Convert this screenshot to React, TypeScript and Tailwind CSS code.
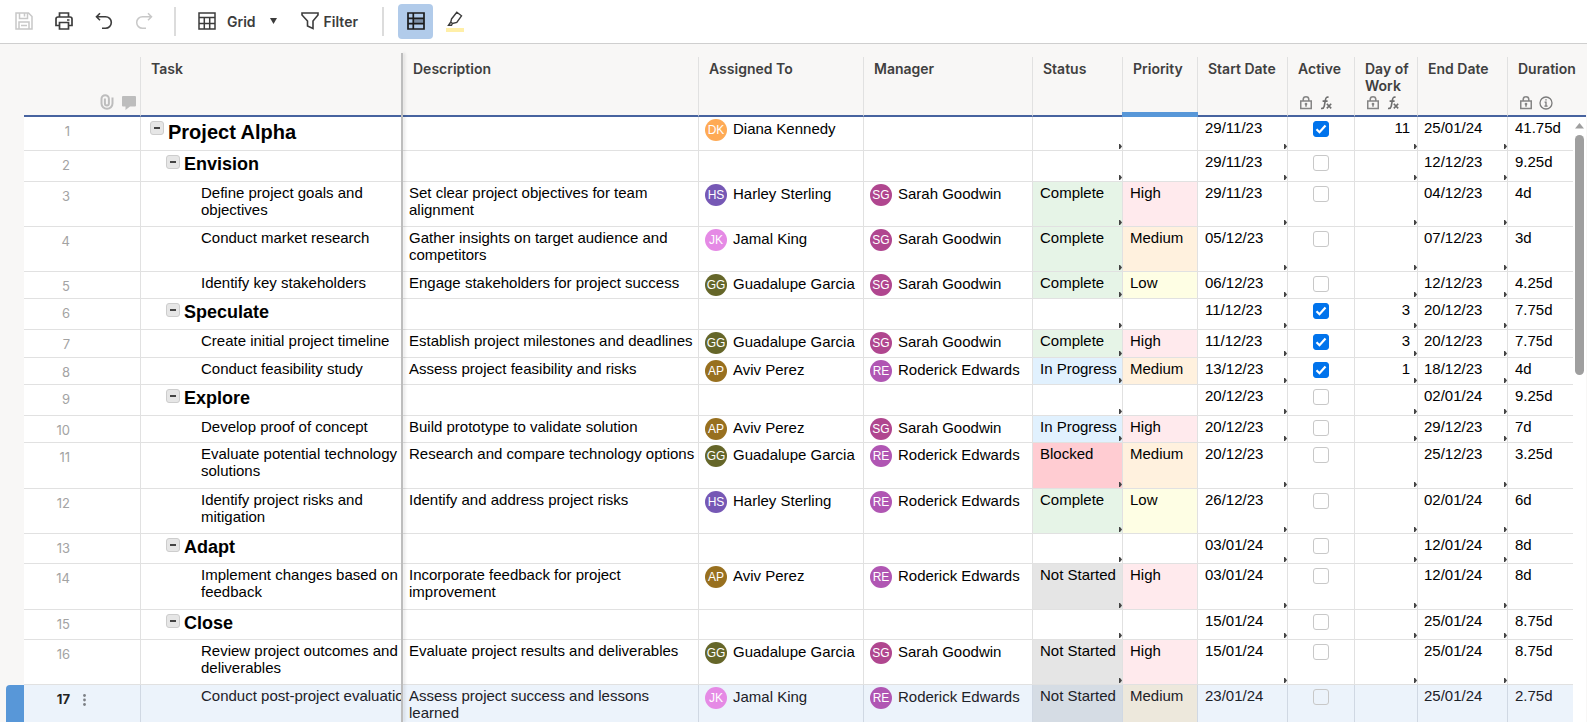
import { ReactNode } from "react";

const PEOPLE: Record<string, [string, string]> = {
  DK: ["Diana Kennedy", "bg-[#feaa55]"],
  HS: ["Harley Sterling", "bg-[#7658b5]"],
  JK: ["Jamal King", "bg-[#e58ae5]"],
  GG: ["Guadalupe Garcia", "bg-[#656629]"],
  AP: ["Aviv Perez", "bg-[#98701f]"],
  SG: ["Sarah Goodwin", "bg-[#b0468f]"],
  RE: ["Roderick Edwards", "bg-[#b056b3]"],
};

const TINT: Record<string, string> = {
  Complete: "bg-[#e6f4e7]",
  "In Progress": "bg-[#e1f1fe]",
  Blocked: "bg-[#ffccd2]",
  "Not Started": "bg-[#e5e5e5]",
  High: "bg-[#ffeaed]",
  Medium: "bg-[#fff1de]",
  Low: "bg-[#fefee4]",
};

const SELECTED_TINT: Record<string, string> = {
  "Not Started": "bg-[#d5dce4]",
  Medium: "bg-[#ede8dc]",
};

type Row = {
  level: 0 | 1 | 2;
  height: string;
  task: string;
  desc?: string;
  who?: string;
  boss?: string;
  status?: string;
  priority?: string;
  start: string;
  active?: boolean;
  day?: string;
  end: string;
  dur: string;
};

const ROWS: Row[] = [
  { level: 0, height: "h-[34px]", task: "Project Alpha", who: "DK", start: "29/11/23", active: true, day: "11", end: "25/01/24", dur: "41.75d" },
  { level: 1, height: "h-[31px]", task: "Envision", start: "29/11/23", end: "12/12/23", dur: "9.25d" },
  { level: 2, height: "h-[45px]", task: "Define project goals and objectives", desc: "Set clear project objectives for team alignment", who: "HS", boss: "SG", status: "Complete", priority: "High", start: "29/11/23", end: "04/12/23", dur: "4d" },
  { level: 2, height: "h-[45px]", task: "Conduct market research", desc: "Gather insights on target audience and competitors", who: "JK", boss: "SG", status: "Complete", priority: "Medium", start: "05/12/23", end: "07/12/23", dur: "3d" },
  { level: 2, height: "h-[27px]", task: "Identify key stakeholders", desc: "Engage stakeholders for project success", who: "GG", boss: "SG", status: "Complete", priority: "Low", start: "06/12/23", end: "12/12/23", dur: "4.25d" },
  { level: 1, height: "h-[31px]", task: "Speculate", start: "11/12/23", active: true, day: "3", end: "20/12/23", dur: "7.75d" },
  { level: 2, height: "h-[28px]", task: "Create initial project timeline", desc: "Establish project milestones and deadlines", who: "GG", boss: "SG", status: "Complete", priority: "High", start: "11/12/23", active: true, day: "3", end: "20/12/23", dur: "7.75d" },
  { level: 2, height: "h-[27px]", task: "Conduct feasibility study", desc: "Assess project feasibility and risks", who: "AP", boss: "RE", status: "In Progress", priority: "Medium", start: "13/12/23", active: true, day: "1", end: "18/12/23", dur: "4d" },
  { level: 1, height: "h-[31px]", task: "Explore", start: "20/12/23", end: "02/01/24", dur: "9.25d" },
  { level: 2, height: "h-[27px]", task: "Develop proof of concept", desc: "Build prototype to validate solution", who: "AP", boss: "SG", status: "In Progress", priority: "High", start: "20/12/23", end: "29/12/23", dur: "7d" },
  { level: 2, height: "h-[46px]", task: "Evaluate potential technology solutions", desc: "Research and compare technology options", who: "GG", boss: "RE", status: "Blocked", priority: "Medium", start: "20/12/23", end: "25/12/23", dur: "3.25d" },
  { level: 2, height: "h-[45px]", task: "Identify project risks and mitigation", desc: "Identify and address project risks", who: "HS", boss: "RE", status: "Complete", priority: "Low", start: "26/12/23", end: "02/01/24", dur: "6d" },
  { level: 1, height: "h-[30px]", task: "Adapt", start: "03/01/24", end: "12/01/24", dur: "8d" },
  { level: 2, height: "h-[46px]", task: "Implement changes based on feedback", desc: "Incorporate feedback for project improvement", who: "AP", boss: "RE", status: "Not Started", priority: "High", start: "03/01/24", end: "12/01/24", dur: "8d" },
  { level: 1, height: "h-[30px]", task: "Close", start: "15/01/24", end: "25/01/24", dur: "8.75d" },
  { level: 2, height: "h-[45px]", task: "Review project outcomes and deliverables", desc: "Evaluate project results and deliverables", who: "GG", boss: "SG", status: "Not Started", priority: "High", start: "15/01/24", end: "25/01/24", dur: "8.75d" },
  { level: 2, height: "h-[45px]", task: "Conduct post-project evaluation", desc: "Assess project success and lessons learned", who: "JK", boss: "RE", status: "Not Started", priority: "Medium", start: "23/01/24", end: "25/01/24", dur: "2.75d" },
];

const SELECTED = 16;

const LockIcon = () => (
  <svg width="12" height="14" viewBox="0 0 12 14" fill="none" stroke="#858585" strokeWidth="1.5">
    <path d="M.75 5h10.500v7.500H.75zM3.200 5V3.400a2.800 2.600 0 0 1 5.600 0V5M6 8v2.800" />
    <circle cx="6" cy="8" r="0.600" fill="#858585" />
  </svg>
);

const FxIcon = () => (
  <svg width="12" height="14" viewBox="0 0 12 14" fill="none" stroke="#6f6f6f" strokeWidth="1.6">
    <path d="M8.600 1.300C6.700.700 5.900 1.700 5.500 3.600L4.200 10.400C3.800 12.300 2.900 12.700 1 12.400M2.600 5.100h5" />
    <path d="M6.800 7.800l4.400 4.600M11.200 7.800l-4.400 4.600" />
  </svg>
);

const InfoIcon = () => (
  <svg width="14" height="14" viewBox="0 0 14 14" fill="none" stroke="#7b7b7b" strokeWidth="1.3">
    <circle cx="7" cy="7" r="6" />
    <path d="M5.600 6.200H7v3.800M5.400 10.200h3.200M6.300 3.900h1.400" />
  </svg>
);

const ClipIcon = () => (
  <svg width="14" height="16" viewBox="0 0 14 16" fill="none" stroke="#bdbdbd" strokeWidth="2">
    <path d="M12.500 3.500V9.500a5.500 5.200 0 0 1-11 0V4.800a3.700 3.600 0 0 1 7.400 0V9.500a2 2 0 0 1-4 0V4.500" />
  </svg>
);

const CommentIcon = () => (
  <svg width="14" height="14" viewBox="0 0 14 14" fill="#bdbdbd">
    <path d="M1 0h12q1 0 1 1v8.500q0 1-1 1H8L3.500 14v-3.500H1q-1 0-1-1V1q0-1 1-1z" />
  </svg>
);

function Person({ id }: { id?: string }) {
  if (!id) return null;
  const [name, color] = PEOPLE[id];
  return (
    <div className="flex items-start gap-1.5 whitespace-nowrap">
      <span className={`flex size-[22px] shrink-0 items-center justify-center rounded-full text-[12px] text-white ${color}`}>{id}</span>
      <span className="leading-5">{name}</span>
    </div>
  );
}

function Check({ label, checked }: { label: string; checked?: boolean }) {
  return (
    <div className="grid justify-center pt-0.5">
      <input
        type="checkbox"
        aria-label={label}
        defaultChecked={checked}
        className="peer col-start-1 row-start-1 size-4 appearance-none rounded-[3px] border border-[#c8c8c8] checked:border-[#0073ec] checked:bg-[#0073ec]"
      />
      <svg className="pointer-events-none col-start-1 row-start-1 opacity-0 peer-checked:opacity-100" width="16" height="16" viewBox="0 0 16 16" fill="none" stroke="#fff" strokeWidth="2.2">
        <path d="M3.500 8.200l3 3 6-6.700" />
      </svg>
    </div>
  );
}

type CellProps = { children?: ReactNode; pad?: string; tint?: string; link?: boolean; last?: boolean; selected?: boolean };

function Cell({ children, pad = "pl-[7px]", tint = "", link = false, last = false, selected = false }: CellProps) {
  return (
    <td className={`relative border-b pr-0 pt-0.5 pb-0 align-top ${last ? "" : "border-r"} ${selected ? "border-[#d0d8e3]" : "border-[#e1e1e1]"} ${pad} ${tint}`}>
      {children}
      {link && (
        <svg className="absolute bottom-px right-0" width="3" height="5" viewBox="0 0 3 5" fill="#444">
          <path d="M0 0h1l2 2.500L1 5H0z" />
        </svg>
      )}
    </td>
  );
}

function TaskLabel({ row, clip }: { row: Row; clip: boolean }) {
  if (row.level === 2) {
    return <div className={clip ? "overflow-hidden whitespace-nowrap pl-[60px]" : "pl-[60px]"}>{row.task}</div>;
  }
  return (
    <div className={row.level === 0 ? "flex items-start gap-1 pl-[9px] pt-px" : "flex items-start gap-1 pl-[25px] pt-px"}>
      <button aria-label={`Collapse ${row.task}`} className="mt-px flex size-3.5 items-center justify-center rounded-[3px] border border-[#cdcdcd] bg-[#e6e6e6]">
        <span className="h-0.5 w-1.5 bg-[#444]" />
      </button>
      <span className={row.level === 0 ? "text-[20px] font-bold leading-6" : "text-[18px] font-bold leading-5"}>{row.task}</span>
    </div>
  );
}

function Head({ label = "", icons, last = false, marked = false }: { label?: string; icons?: ReactNode; last?: boolean; marked?: boolean }) {
  return (
    <th scope="col" className={`relative border-b-2 border-b-[#47639f] border-r-[#e1e1e1] p-0 text-left align-top ${last ? "" : "border-r"}`}>
      <div className="flex h-[58px] flex-col justify-between pb-[5px] pt-[3px]">
        <span className="pl-2.5 text-[14px] font-semibold leading-[17px] text-[#3f3f3f]">{label}</span>
        {icons}
      </div>
      {marked && <div className="absolute -bottom-0.5 -left-px -right-px h-[5px] bg-[#5897d8]" />}
    </th>
  );
}

function Toolbar() {
  return (
    <header className="flex h-11 shrink-0 items-center border-b border-[#cfcfcf] bg-white pb-px pl-[15px] font-[Inter,sans-serif] text-[14px] font-semibold text-[#3c3c3c]">
      <button aria-label="Save" className="text-[#c8c8c8]">
        <svg width="18" height="18" viewBox="0 0 18 18" fill="none" stroke="currentColor" strokeWidth="1.5">
          <path d="M1 1h12.500L17 4.500V17H1zM4.500 1v5.500h8V1M4 17v-7h10v7M9.500 1v3.500M6 13.500h6" />
        </svg>
      </button>
      <button aria-label="Print" className="ml-[22px]">
        <svg width="18" height="18" viewBox="0 0 18 18" fill="none" stroke="currentColor" strokeWidth="1.7">
          <path d="M4.500 5V1h9v4M4.500 13.500H1V7q0-2 2-2h12q2 0 2 2v6.500h-3.500M4.500 10.500h9V17h-9zM12 8h2.500" />
        </svg>
      </button>
      <button aria-label="Undo" className="ml-[22px]">
        <svg width="18" height="18" viewBox="0 0 18 18" fill="none" stroke="currentColor" strokeWidth="1.6">
          <path d="M5 1.200L1.500 4.700 5 8.200M1.500 4.700H10.500a5.800 5.800 0 0 1 0 11.600H7" />
        </svg>
      </button>
      <button aria-label="Redo" className="ml-[22px] text-[#c8c8c8]">
        <svg width="18" height="18" viewBox="0 0 18 18" fill="none" stroke="currentColor" strokeWidth="1.5">
          <path d="M13 1.200l3.500 3.500L13 8.200M16.500 4.700H7.500a5.800 5.800 0 0 0 0 11.600H11" />
        </svg>
      </button>
      <div className="ml-[21px] h-[29px] w-0.5 bg-[#dcdcdc]" />
      <button className="ml-[22px] flex items-center">
        <svg width="18" height="18" viewBox="0 0 18 18" fill="none" stroke="currentColor" strokeWidth="1.5">
          <path d="M1 1h16v16H1zM1 5.500h16M1 11.500h16M6.300 5.500V17M11.700 5.500V17" />
        </svg>
        <span className="ml-[11px]">Grid</span>
        <svg className="ml-3.5" width="7" height="6" viewBox="0 0 7 6" fill="currentColor">
          <path d="M0 0h7L3.500 6z" />
        </svg>
      </button>
      <button className="ml-6 flex items-center gap-[5px]">
        <svg width="18" height="18" viewBox="0 0 18 18" fill="none" stroke="currentColor" strokeWidth="1.6">
          <path d="M1 1h16v2L12 9v7.500L6.500 14V9L1 3z" />
        </svg>
        Filter
      </button>
      <div className="ml-6 h-[29px] w-0.5 bg-[#dcdcdc]" />
      <button aria-label="Sheet rows" aria-pressed="true" className="ml-3.5 flex size-[35px] items-center justify-center rounded bg-[#b1cbea] text-[#1c1c1c]">
        <svg width="18" height="18" viewBox="0 0 18 18" fill="none" stroke="currentColor" strokeWidth="1.7">
          <path d="M6.500 6h10.500v5.500H6.500z" fill="#7c8fa6" stroke="none" />
          <path d="M1 1h16v16H1zM1 6.300h16M1 11.700h16M6.300 1v16" />
        </svg>
      </button>
      <button aria-label="Highlight changes" className="ml-[13px]">
        <svg width="18" height="21" viewBox="0 0 18 21" fill="none" stroke="currentColor" strokeWidth="1.4">
          <path d="M5.500 8L10.800 1.200 15.500 4.800 10.800 11.500 6.500 12.500 4.800 11zM4.800 11L2.500 14.300h3l1-1.800" />
          <path d="M0 17h18v4H0z" fill="#ffefa8" stroke="none" />
        </svg>
      </button>
    </header>
  );
}

export default function App() {
  const lockFx = (
    <span className="flex gap-2 pl-3">
      <LockIcon />
      <FxIcon />
    </span>
  );
  return (
    <div className="flex h-screen flex-col overflow-hidden bg-[#f8f7f6] font-['Liberation_Sans',Arial,sans-serif] text-[15px] leading-[17px] text-black">
      <Toolbar />
      <main className="relative min-h-0 flex-1 overflow-hidden pr-px pt-[13px]">
        <table className="w-full table-fixed border-separate border-spacing-0">
          <colgroup>
            <col className="w-6" />
            <col className="w-[117px]" />
            <col className="w-[262px]" />
            <col className="w-[296px]" />
            <col className="w-[165px]" />
            <col className="w-[169px]" />
            <col className="w-[90px]" />
            <col className="w-[75px]" />
            <col className="w-[90px]" />
            <col className="w-[67px]" />
            <col className="w-[63px]" />
            <col className="w-[90px]" />
            <col />
          </colgroup>
          <thead className="font-[Inter,sans-serif]">
            <tr>
              <td />
              <Head
                icons={
                  <span className="flex items-end justify-end gap-2 pr-1">
                    <ClipIcon />
                    <CommentIcon />
                  </span>
                }
              />
              <Head label="Task" />
              <Head label="Description" />
              <Head label="Assigned To" />
              <Head label="Manager" />
              <Head label="Status" />
              <Head label="Priority" marked />
              <Head label="Start Date" />
              <Head label="Active" icons={lockFx} />
              <Head label="Day of Work" icons={lockFx} />
              <Head label="End Date" />
              <Head
                label="Duration"
                last
                icons={
                  <span className="flex gap-[7px] pl-3">
                    <LockIcon />
                    <InfoIcon />
                  </span>
                }
              />
            </tr>
          </thead>
          <tbody>
            {ROWS.map((r, i) => {
              const selected = i === SELECTED;
              const tint = (v?: string) => (v ? (selected ? SELECTED_TINT[v] : TINT[v]) : "");
              return (
                <tr key={r.task} className={`${r.height} ${selected ? "bg-[#ecf3fb] text-[#1c2128]" : "bg-white"}`}>
                  <td className="bg-[#f8f7f6] p-0 align-top">
                    {selected && <div className="ml-1.5 h-[45px] rounded-tl-sm bg-[#5897d8]" />}
                  </td>
                  <Cell selected={selected} pad="pl-1.5">
                    <div className="flex items-center gap-[13px] pt-1 font-[Inter,sans-serif] text-[13px]">
                      <span className={selected ? "w-10 text-right font-bold text-[#222]" : "w-10 text-right text-[#a3a3a3]"}>{i + 1}</span>
                      {selected && (
                        <button aria-label="Row menu">
                          <svg width="3" height="12" viewBox="0 0 3 12" fill="#7d8086">
                            <circle cx="1.5" cy="1.5" r="1.4" />
                            <circle cx="1.5" cy="6" r="1.4" />
                            <circle cx="1.5" cy="10.5" r="1.4" />
                          </svg>
                        </button>
                      )}
                    </div>
                  </Cell>
                  <Cell selected={selected} pad="pl-0">
                    <TaskLabel row={r} clip={selected} />
                  </Cell>
                  <Cell selected={selected} pad="pl-1.5">
                    {r.desc}
                  </Cell>
                  <Cell selected={selected} pad="pl-1.5">
                    <Person id={r.who} />
                  </Cell>
                  <Cell selected={selected} pad="pl-1.5">
                    <Person id={r.boss} />
                  </Cell>
                  <Cell selected={selected} link tint={tint(r.status)}>
                    <span className="whitespace-nowrap">{r.status}</span>
                  </Cell>
                  <Cell selected={selected} tint={tint(r.priority)}>
                    {r.priority}
                  </Cell>
                  <Cell selected={selected} link>
                    {r.start}
                  </Cell>
                  <Cell selected={selected} pad="pl-0">
                    <Check label={`${r.task} active`} checked={r.active} />
                  </Cell>
                  <Cell selected={selected} link pad="pl-0">
                    <div className="pr-[7px] text-right">{r.day}</div>
                  </Cell>
                  <Cell selected={selected} link pad="pl-1.5">
                    {r.end}
                  </Cell>
                  <Cell selected={selected} last>
                    {r.dur}
                  </Cell>
                </tr>
              );
            })}
          </tbody>
        </table>
        <div className="absolute bottom-0 left-[401px] top-[9px] w-0.5 bg-[#bdbdbd] shadow-[2px_0_3px_rgba(0,0,0,0.12)]" />
        <div className="absolute bottom-0 right-px top-[73px] flex w-[13px] flex-col items-center bg-white pt-1.5">
          <svg width="9" height="6" viewBox="0 0 9 6" fill="#9f9f9f">
            <path d="M4.500 0L9 5.500H0z" />
          </svg>
          <div className="mt-1.5 h-[240px] w-[9px] rounded-full bg-[#9f9f9f]" />
        </div>
      </main>
    </div>
  );
}
